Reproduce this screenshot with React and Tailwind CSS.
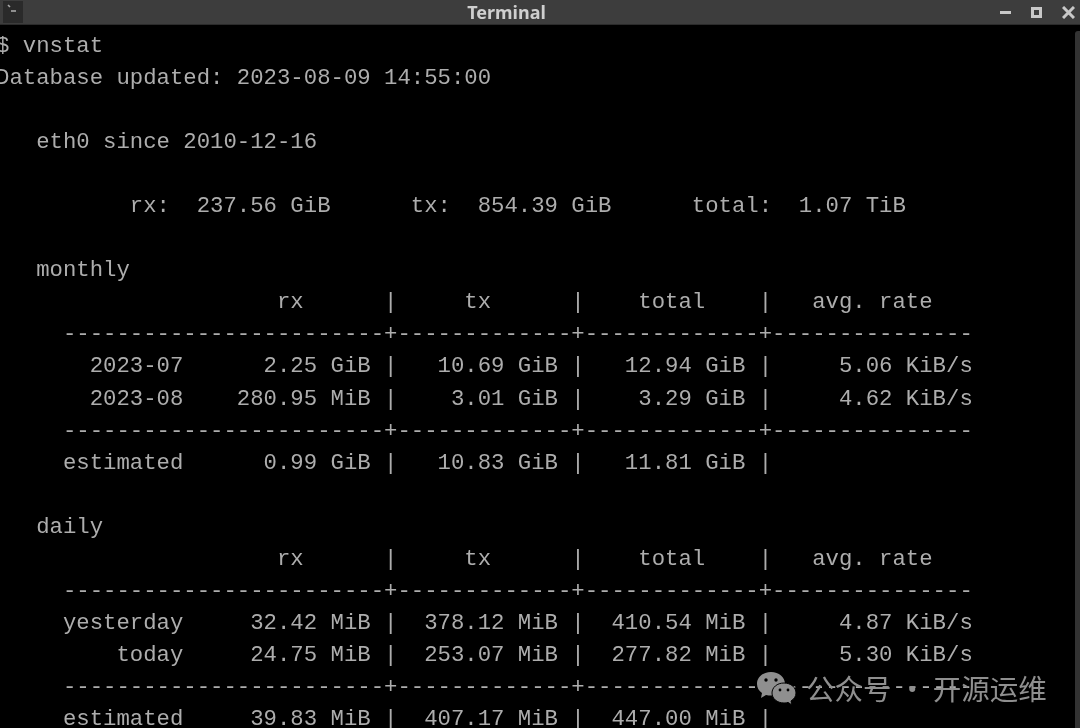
import React from 'react';

const row = (label, rx, tx, total, rate) =>
    `${label.padStart(14)}${rx.padStart(14)} | ${tx.padStart(11)} | ${total.padStart(11)} |${rate ? rate.padStart(15) : ''}`;
const header = `${'rx'.padStart(23)}      |     tx      |    total    |   avg. rate`;
const divider = `     ${'-'.repeat(24)}+${'-'.repeat(13)}+${'-'.repeat(13)}+${'-'.repeat(15)}`;

const LINES = [
    '$ vnstat',
    'Database updated: 2023-08-09 14:55:00',
    '',
    '   eth0 since 2010-12-16',
    '',
    '          rx:  237.56 GiB      tx:  854.39 GiB      total:  1.07 TiB',
    '',
    '   monthly',
    header,
    divider,
    row('2023-07', '2.25 GiB', '10.69 GiB', '12.94 GiB', '5.06 KiB/s'),
    row('2023-08', '280.95 MiB', '3.01 GiB', '3.29 GiB', '4.62 KiB/s'),
    divider,
    row('estimated', '0.99 GiB', '10.83 GiB', '11.81 GiB'),
    '',
    '   daily',
    header,
    divider,
    row('yesterday', '32.42 MiB', '378.12 MiB', '410.54 MiB', '4.87 KiB/s'),
    row('today', '24.75 MiB', '253.07 MiB', '277.82 MiB', '5.30 KiB/s'),
    divider,
    row('estimated', '39.83 MiB', '407.17 MiB', '447.00 MiB'),
];

function TerminalIcon() {
    return (
        <div className="w-[20px] h-[22px] bg-[#2a2a2a] flex items-start">
            <svg width="20" height="22" viewBox="0 0 20 22" fill="none" stroke="#a8a8a8" strokeWidth="1.6">
                <path d="M5 4l2 2" />
                <path d="M8 10h5" />
            </svg>
        </div>
    );
}

function WeChatMark() {
    return (
        <svg width="42" height="34" viewBox="0 0 42 34">
            <path d="M15 1C7 1 1 6 1 13c0 4 2 7 5 9l-1 5 5-3c2 .5 3 .6 5 .6 8 0 14-5 14-11.600C29 6 23 1 15 1z" fill="#8f8f8f" />
            <path d="M28 12c-7 0-12 4.500-12 10s5 10 12 10c1.500 0 3-.2 4-.6l4 2.600-1-4c3-2 5-4.500 5-8 0-5.500-5-10-12-10z" fill="#8f8f8f" stroke="#000" strokeWidth="1" />
            <circle cx="10" cy="9" r="1.700" fill="#000" />
            <circle cx="20" cy="9" r="1.700" fill="#000" />
            <circle cx="24" cy="19" r="1.400" fill="#000" />
            <circle cx="32" cy="19" r="1.400" fill="#000" />
        </svg>
    );
}

export default function App() {
    return (
        <div className="relative w-[1080px] h-[728px] overflow-hidden bg-black flex flex-col">
            <div className="h-[25px] shrink-0 bg-[#3d3d3d] border-b border-[#2b2b2b] flex items-center justify-between pl-[3px] pr-[5px]">
                <TerminalIcon />
                <span className="text-[18px] font-bold text-[#cfcfcf] ml-[-10px] font-['Noto_Sans',sans-serif] blur-[0.4px]">Terminal</span>
                <div className="flex items-center gap-[20px] blur-[0.4px]">
                    <div className="w-[11px] h-[3px] bg-[#c8c8c8]" />
                    <div className="w-[11px] h-[11px] border-[3px] border-[#c8c8c8]" />
                    <svg width="13" height="13" viewBox="0 0 13 13" stroke="#c8c8c8" strokeWidth="3" fill="none">
                        <path d="M1 1l11 11M12 1L1 12" />
                    </svg>
                </div>
            </div>
            <div className="flex flex-1 min-h-0">
                <div className="flex-1 min-w-0 ml-[-4px] pt-[4.5px] font-['Liberation_Mono',monospace] text-[22.3px] text-[#adadad] blur-[0.6px]">
                    {LINES.map((line, i) => (
                        <div key={i} className="h-[32.1px] leading-[32.1px] whitespace-pre">{line}</div>
                    ))}
                </div>
                <div className="w-[5px] shrink-0 mt-[6px] bg-[#333333] rounded-tl-[3px]" />
            </div>
            <div className="absolute left-[756px] top-[667px] flex items-center gap-[8px] text-[#8f8f8f] text-[28.5px] font-['Noto_Sans_CJK_SC',sans-serif] blur-[0.3px]">
                <WeChatMark />
                <span className="whitespace-pre">公众号 · 开源运维</span>
            </div>
        </div>
    );
}
